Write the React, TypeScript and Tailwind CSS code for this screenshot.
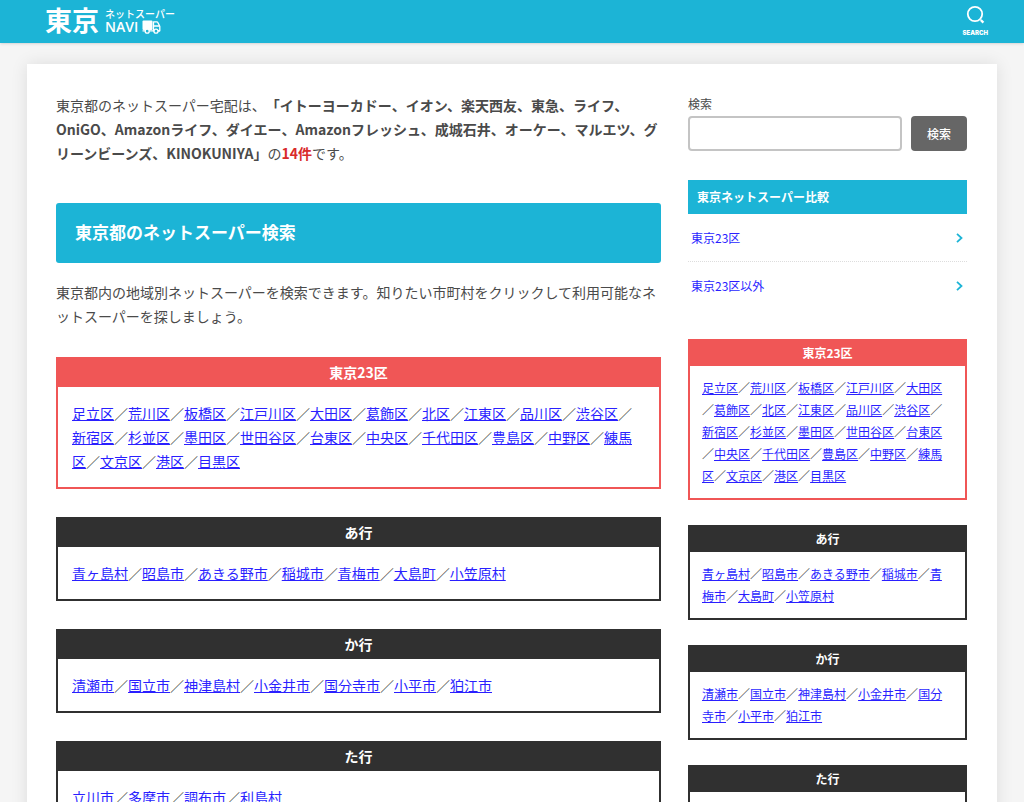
import type { ReactNode } from "react";

const wards = [
  "足立区", "荒川区", "板橋区", "江戸川区", "大田区", "葛飾区", "北区", "江東区",
  "品川区", "渋谷区", "新宿区", "杉並区", "墨田区", "世田谷区", "台東区", "中央区",
  "千代田区", "豊島区", "中野区", "練馬区", "文京区", "港区", "目黒区",
];

const groups = [
  { title: "東京23区", red: true, areas: wards },
  { title: "あ行", red: false, areas: ["青ヶ島村", "昭島市", "あきる野市", "稲城市", "青梅市", "大島町", "小笠原村"] },
  { title: "か行", red: false, areas: ["清瀬市", "国立市", "神津島村", "小金井市", "国分寺市", "小平市", "狛江市"] },
  { title: "た行", red: false, areas: ["立川市", "多摩市", "調布市", "利島村"] },
];

function AreaLinks({ areas }: { areas: string[] }) {
  const nodes: ReactNode[] = [];
  areas.forEach((area, i) => {
    if (i > 0) nodes.push("／");
    nodes.push(
      <a key={area} href="#" className="text-[#2a1fff] underline underline-offset-1">{area}</a>
    );
  });
  return <p className="[line-break:anywhere]">{nodes}</p>;
}

function AreaBox({ title, red, areas, small }: { title: string; red: boolean; areas: string[]; small?: boolean }) {
  return (
    <section className={red ? "border-2 border-t-0 border-[#f05656]" : "border-2 border-t-0 border-[#303030]"}>
      <h3 className={
        (red ? "bg-[#f05656]" : "bg-[#303030]") +
        " text-center font-bold text-white " +
        (small ? "text-xs leading-[27px]" : "text-sm leading-[30px]")
      }>
        {title}
      </h3>
      <div className={small ? "px-3 py-[11px] text-xs leading-[22px]" : "px-[14px] py-[14px] text-sm leading-6"}>
        <AreaLinks areas={areas} />
      </div>
    </section>
  );
}

function Truck() {
  return (
    <svg width="19" height="14" viewBox="0 0 19 14" fill="none" aria-hidden="true">
      <rect x="0.500" y="0.500" width="10" height="9.500" rx="1" fill="#fff" />
      <path d="M11.500 1.800h3.200c.6 0 1 .3 1.200.8l1.900 3.700v4.500h-6.300z" stroke="#fff" strokeWidth="1.300" strokeLinejoin="round" />
      <path d="M12 6h5.500M0.500 10.800h17.500" stroke="#fff" strokeWidth="1.300" />
      <circle cx="5.200" cy="11.200" r="2" fill="#1cb4d6" stroke="#fff" strokeWidth="1.300" />
      <circle cx="14" cy="11.200" r="2" fill="#1cb4d6" stroke="#fff" strokeWidth="1.300" />
    </svg>
  );
}

function Header() {
  return (
    <header className="flex h-[43px] items-start justify-between bg-[#1cb4d6] pl-[45px] pr-9 text-white shadow-sm">
      <a href="#" className="flex items-center gap-[6px]">
        <span className="text-[27px] font-bold leading-10">東京</span>
        <span className="flex flex-col pt-[2px]">
          <span className="text-[10px] font-medium leading-3">ネットスーパー</span>
          <span className="flex items-center gap-1 font-['Open_Sans','Noto_Sans_CJK_JP',sans-serif] text-sm font-semibold leading-[14px]">
            NAVI <Truck />
          </span>
        </span>
      </a>
      <button type="button" className="flex flex-col items-center gap-[3px] pt-[5px]">
        <svg width="20" height="20" viewBox="0 0 20 20" fill="none" stroke="#fff" strokeWidth="1.800" aria-hidden="true">
          <circle cx="10" cy="9" r="7.200" />
          <path d="M15.800 15l2.600 2.600" strokeWidth="2.400" />
        </svg>
        <span className="font-['Inter',sans-serif] text-[6px] font-black leading-[10px]">SEARCH</span>
      </button>
    </header>
  );
}

function Sidebar() {
  return (
    <aside>
      <form onSubmit={(e) => e.preventDefault()}>
        <label htmlFor="search" className="block text-xs leading-5">検索</label>
        <div className="mt-[2px] flex gap-[9px]">
          <input id="search" type="search" className="h-[35px] min-w-0 flex-1 rounded border-2 border-[#c4c4c4] bg-white px-2 text-sm" />
          <button type="submit" className="h-[35px] w-14 rounded bg-[#666] text-xs font-medium text-white">検索</button>
        </div>
      </form>

      <nav className="mt-[29px]">
        <h4 className="bg-[#1cb4d6] pl-[9px] text-xs font-bold leading-[34px] text-white">東京ネットスーパー比較</h4>
        <ul>
          {["東京23区", "東京23区以外"].map((label) => (
            <li key={label} className="border-b border-dotted border-[#ddd] last:border-b-0">
              <a href="#" className="flex h-[47px] items-center justify-between pl-[3px] pr-1 text-xs text-[#2a1fff]">
                {label}
                <svg width="7" height="10" viewBox="0 0 7 10" fill="none" stroke="#1cb4d6" strokeWidth="1.800" aria-hidden="true">
                  <path d="M1 .8l4.500 4.200L1 9.200" />
                </svg>
              </a>
            </li>
          ))}
        </ul>
      </nav>

      <div className="mt-[30px] flex flex-col gap-[25px]">
        {groups.map((g) => <AreaBox key={g.title} {...g} small />)}
      </div>
    </aside>
  );
}

export default function App() {
  return (
    <div className="h-screen overflow-hidden bg-[#f5f5f5] font-['Noto_Sans_CJK_JP',sans-serif] text-[#4a4a4a] [text-spacing-trim:space-all]">
      <Header />
      <div className="mx-[27px] mt-[21px] grid grid-cols-[minmax(0,1fr)_279px] gap-[27px] bg-white pb-10 pl-[29px] pr-[30px] pt-[29px] shadow-[0_0_16px_rgba(0,0,0,0.1)]">
        <main>
          <p className="text-sm leading-6">
            東京都のネットスーパー宅配は、<b>「イトーヨーカドー、イオン、楽天西友、東急、ライフ、OniGO、Amazonライフ、ダイエー、Amazonフレッシュ、成城石井、オーケー、マルエツ、グリーンビーンズ、KINOKUNIYA」</b>の<b className="text-[#d92b2b]">14件</b>です。
          </p>
          <h2 className="mt-[38px] rounded-[3px] bg-[#1cb4d6] pb-[2px] pl-[19px] text-[17px] font-bold leading-[58px] text-white">
            東京都のネットスーパー検索
          </h2>
          <p className="mt-[17px] text-sm leading-6">
            東京都内の地域別ネットスーパーを検索できます。知りたい市町村をクリックして利用可能なネットスーパーを探しましょう。
          </p>
          <div className="mt-[29px] flex flex-col gap-7">
            {groups.map((g) => <AreaBox key={g.title} {...g} />)}
          </div>
        </main>
        <div className="pt-px">
          <Sidebar />
        </div>
      </div>
    </div>
  );
}
